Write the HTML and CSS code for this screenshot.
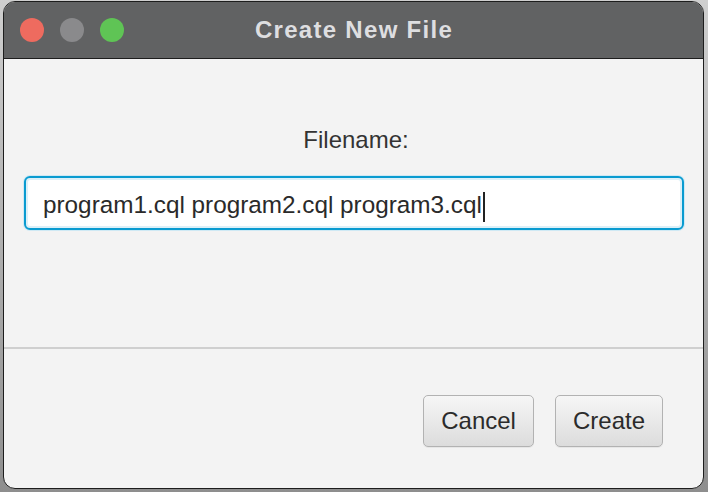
FILE: index.html
```html
<!DOCTYPE html>
<html>
<head>
<meta charset="utf-8">
<link rel="stylesheet" href="styles.css">
</head>
<body>
<div class="window">
  <div class="titlebar">
    <div class="lights">
      <span class="light red"></span>
      <span class="light gray"></span>
      <span class="light green"></span>
    </div>
    <div class="title">Create New File</div>
    <div></div>
  </div>
  <div class="content">
    <div class="form">
      <div class="label">Filename:</div>
      <div class="field"><span class="value">program1.cql program2.cql program3.cql</span><span class="caret"></span></div>
    </div>
    <div class="separator"></div>
    <div class="footer">
      <button class="btn">Cancel</button>
      <button class="btn">Create</button>
    </div>
  </div>
</div>
</body>
</html>
```

FILE: styles.css
```css
html, body {
  margin: 0;
  height: 100%;
}
body {
  box-sizing: border-box;
  height: 492px;
  padding: 1px 4px 3px 3px;
  background: linear-gradient(#cfcfcf, #8e8e8e);
  font-family: "Liberation Sans", Arial, sans-serif;
  display: flex;
}
.window {
  flex: 1;
  display: flex;
  flex-direction: column;
  border: 1px solid #1d1d1d;
  border-radius: 12px;
  overflow: hidden;
  background: #f3f3f3;
}
.titlebar {
  height: 56px;
  flex: none;
  background: #616263;
  border-bottom: 1px solid #1d1d1d;
  display: grid;
  grid-template-columns: 1fr auto 1fr;
  align-items: center;
}
.lights {
  display: flex;
  gap: 16px;
  padding-left: 16px;
}
.light {
  width: 24px;
  height: 24px;
  border-radius: 50%;
  display: block;
}
.red { background: #ee6b5f; }
.gray { background: #8a8a8c; }
.green { background: #5fc455; }
.title {
  color: #dedee0;
  font-weight: bold;
  font-size: 24px;
  letter-spacing: 1.3px;
  line-height: 56px;
  padding-left: 1px;
}
.content {
  flex: 1;
  display: flex;
  flex-direction: column;
}
.form {
  height: 288px;
  box-sizing: border-box;
  padding: 67px 19px 0 20px;
  display: flex;
  flex-direction: column;
  align-items: stretch;
}
.label {
  text-align: center;
  font-size: 24px;
  line-height: 28px;
  color: #333333;
  padding-left: 4px;
}
.field {
  margin-top: 22px;
  height: 54px;
  box-sizing: border-box;
  border: 2px solid #0a9bd0;
  border-radius: 6px;
  background: #ffffff;
  box-shadow: 0 0 0 1px #cfe9f4, inset 0 0 0 2px #dcf0f8;
  padding: 13px 17px 0 17px;
  font-size: 24.3px;
  line-height: 28px;
  color: #2a2a2a;
  display: flex;
  align-items: flex-start;
}
.caret {
  display: block;
  width: 2px;
  height: 30px;
  margin-top: 1px;
  margin-left: 1px;
  background: #222222;
}
.separator {
  height: 2px;
  background: #cfcfcf;
  flex: none;
}
.footer {
  flex: 1;
  display: flex;
  justify-content: flex-end;
  align-items: flex-start;
  gap: 21px;
  padding: 46px 40px 0 0;
}
.btn {
  height: 52px;
  padding: 0 17px;
  border: 1px solid #b2b2b2;
  border-radius: 5px;
  background: linear-gradient(#f6f6f6, #dcdcdc);
  font-family: "Liberation Sans", Arial, sans-serif;
  font-size: 24px;
  color: #2b2b2b;
  box-shadow: 0 1px 0 #e6e6e6;
}
```
